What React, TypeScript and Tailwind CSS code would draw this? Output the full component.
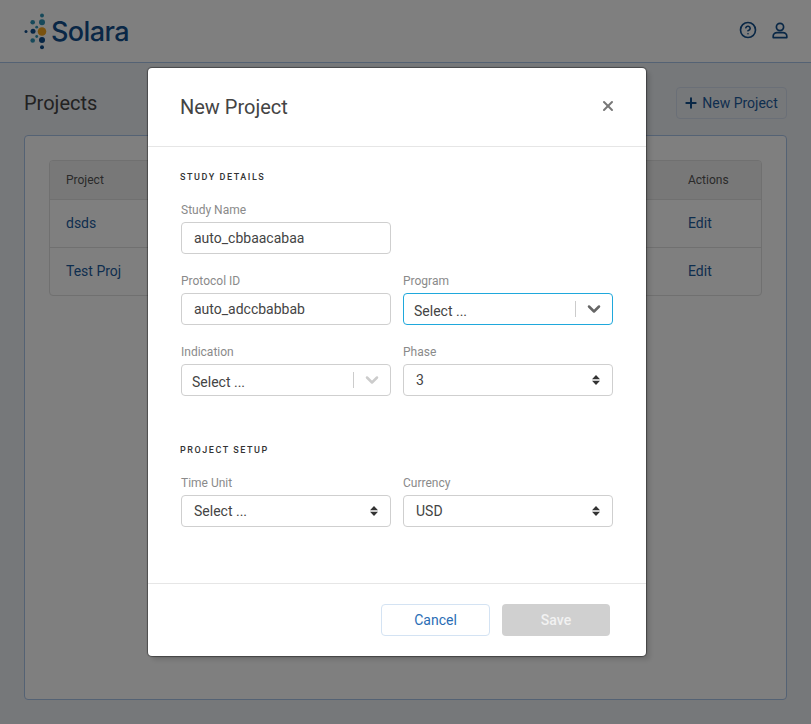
// New Project dialog over the projects list.
import { ChevronDown, CircleHelp, Plus, X } from 'lucide-react';
import type { ReactNode } from 'react';

const PROJECTS = ['dsds', 'Test Proj'];

function SolaraMark() {
    const dots: [number, number, number, string][] = [
        [18, 2.5, 2, '#2f93b5'],
        [8.7, 9.2, 2.3, '#2f93b5'],
        [18, 9.2, 3, '#2f93b5'],
        [12.7, 14.2, 1.4, '#2f93b5'],
        [2, 18.5, 1.5, '#0f4c8a'],
        [9, 18.2, 2.5, '#0f4c8a'],
        [18, 18.5, 4.3, '#f2a51f'],
        [8.7, 27.5, 2.3, '#2f93b5'],
        [12.7, 23.5, 1.4, '#2f93b5'],
        [18, 27, 3, '#0f4c8a'],
        [18, 34.2, 2, '#0f4c8a'],
    ];
    return (
        <svg width="24" height="37" viewBox="0 0 24 37">
            {dots.map(([cx, cy, r, fill]) => (
                <circle key={`${cx}-${cy}`} cx={cx} cy={cy} r={r} fill={fill} />
            ))}
        </svg>
    );
}

function UserIcon() {
    return (
        <svg width="16" height="17" viewBox="0 0 16 17" fill="none" stroke="currentColor" strokeWidth="1.7">
            <circle cx="8" cy="5" r="3.6" />
            <path d="M1.2 14 C1.2 11.6 3.4 10.6 5 10.6 H11 C12.6 10.6 14.8 11.6 14.8 14 V15.6 H1.2 Z" strokeLinejoin="round" />
        </svg>
    );
}

function Field({ label, children }: { label: string; children: ReactNode }) {
    return (
        <div className="flex w-[210px] flex-col">
            <label className="mb-[5px] h-[14px] text-xs leading-[14px] text-[#8a8a8a]">{label}</label>
            {children}
        </div>
    );
}

function TextInput({ value }: { value: string }) {
    return (
        <div className="flex h-8 items-center rounded border border-[#cfcfcf] px-3 text-sm text-[#444]">
            {value}
        </div>
    );
}

function UpDown() {
    return (
        <svg width="8" height="10" viewBox="0 0 8 10" className="text-[#333]">
            <path d="M4 0 L8 4.2 H0 Z M4 10 L0 5.8 H8 Z" fill="currentColor" />
        </svg>
    );
}

function NativeSelect({ value }: { value: string }) {
    return (
        <div className="flex h-8 items-center justify-between rounded border border-[#cfcfcf] px-3 text-sm text-[#444]">
            {value}
            <UpDown />
        </div>
    );
}

function ComboSelect({ focused, muted }: { focused?: boolean; muted?: boolean }) {
    return (
        <div
            className={
                focused
                    ? 'flex h-8 items-center rounded border border-[#1fa8dc] pl-[10px] text-sm text-[#444]'
                    : 'flex h-8 items-center rounded border border-[#cfcfcf] pl-[10px] text-sm text-[#444]'
            }
        >
            <span className="flex-1 pt-1">Select ...</span>
            <span className="h-4 w-px bg-[#cccccc]" />
            <span className="flex w-[36px] justify-center">
                <ChevronDown
                    size={20}
                    strokeWidth={3}
                    className={muted ? 'text-[#cccccc]' : 'text-[#666666]'}
                />
            </span>
        </div>
    );
}

function SectionLabel({ children }: { children: ReactNode }) {
    return (
        <div className="-ml-px text-[9px] leading-3 font-medium tracking-[1.55px] text-[#333]">{children}</div>
    );
}

export default function App() {
    return (
        <div className="relative h-[724px] w-[811px] overflow-hidden bg-[#edf0f4] font-['Roboto',sans-serif]">
            <header className="flex h-[63px] items-center justify-between border-b border-[#a9c4e8] bg-white pr-[23px] pl-6">
                <div className="flex items-center gap-[3px]">
                    <SolaraMark />
                    <span className="font-['Inter',sans-serif] text-[27px] leading-none font-medium tracking-[-0.6px] text-[#124f8c]">
                        Solara
                    </span>
                </div>
                <div className="mb-[2px] flex items-center gap-[15px] text-[#124f8c]">
                    <CircleHelp size={18} strokeWidth={2.2} />
                    <UserIcon />
                </div>
            </header>

            <main className="px-6">
                <div className="flex h-[72px] items-center justify-between pt-[8px]">
                    <h1 className="text-xl text-[#444]">Projects</h1>
                    <button className="flex h-8 w-[111px] items-center justify-center gap-[3px] rounded border border-[#d4dfee] pr-[2px] text-sm text-[#1d5c9e]">
                        <Plus size={16} strokeWidth={3} className="text-[#124f8c]" />
                        New Project
                    </button>
                </div>
                <section className="h-[565px] rounded border border-[#a9c4e8] bg-white px-6 pt-6">
                    <div className="overflow-hidden rounded border border-[#e0e0e0] text-sm">
                        <div className="flex h-[38px] items-center justify-between bg-[#f0f0f0] px-4 text-xs text-[#555]">
                            <span>Project</span>
                            <span className="w-[57px]">Actions</span>
                        </div>
                        {PROJECTS.map((name) => (
                            <div
                                key={name}
                                className="flex h-12 items-center justify-between border-t border-[#e0e0e0] px-4 pb-[2px] text-[#1d5c9e]"
                            >
                                <span>{name}</span>
                                <span className="w-[57px]">Edit</span>
                            </div>
                        ))}
                    </div>
                </section>
            </main>

            <div className="absolute inset-0 bg-black/50">
                <div className="mt-[68px] ml-[148px] flex h-[588px] w-[498px] flex-col rounded bg-white shadow-[0_0_1px_1px_rgba(0,0,0,0.4),4px_4px_4px_rgba(0,0,0,0.12)]">
                    <div className="flex h-[79px] items-center justify-between border-b border-[#e6e6e6] pr-[30px] pl-8">
                        <h2 className="text-xl text-[#444]">New Project</h2>
                        <X size={16} strokeWidth={3} className="mb-[2px] text-[#777]" />
                    </div>

                    <div className="flex flex-1 flex-col pt-6 pl-[33px]">
                        <SectionLabel>STUDY DETAILS</SectionLabel>
                        <div className="mt-5 flex flex-col gap-5">
                            <Field label="Study Name">
                                <TextInput value="auto_cbbaacabaa" />
                            </Field>
                            <div className="flex gap-3">
                                <Field label="Protocol ID">
                                    <TextInput value="auto_adccbabbab" />
                                </Field>
                                <Field label="Program">
                                    <ComboSelect focused />
                                </Field>
                            </div>
                            <div className="flex gap-3">
                                <Field label="Indication">
                                    <ComboSelect muted />
                                </Field>
                                <Field label="Phase">
                                    <NativeSelect value="3" />
                                </Field>
                            </div>
                        </div>
                        <div className="mt-12">
                            <SectionLabel>PROJECT SETUP</SectionLabel>
                        </div>
                        <div className="mt-5 flex gap-3">
                            <Field label="Time Unit">
                                <NativeSelect value="Select ..." />
                            </Field>
                            <Field label="Currency">
                                <NativeSelect value="USD" />
                            </Field>
                        </div>
                    </div>

                    <div className="flex h-[73px] items-start justify-end gap-3 border-t border-[#e6e6e6] pt-5 pr-9">
                        <button className="h-8 w-[109px] rounded border border-[#d4e3f3] text-sm text-[#2a6db5]">
                            Cancel
                        </button>
                        <button className="h-8 w-[108px] rounded bg-[#d0d0d0] text-sm font-medium text-[#f2f2f2]">
                            Save
                        </button>
                    </div>
                </div>
            </div>
        </div>
    );
}
